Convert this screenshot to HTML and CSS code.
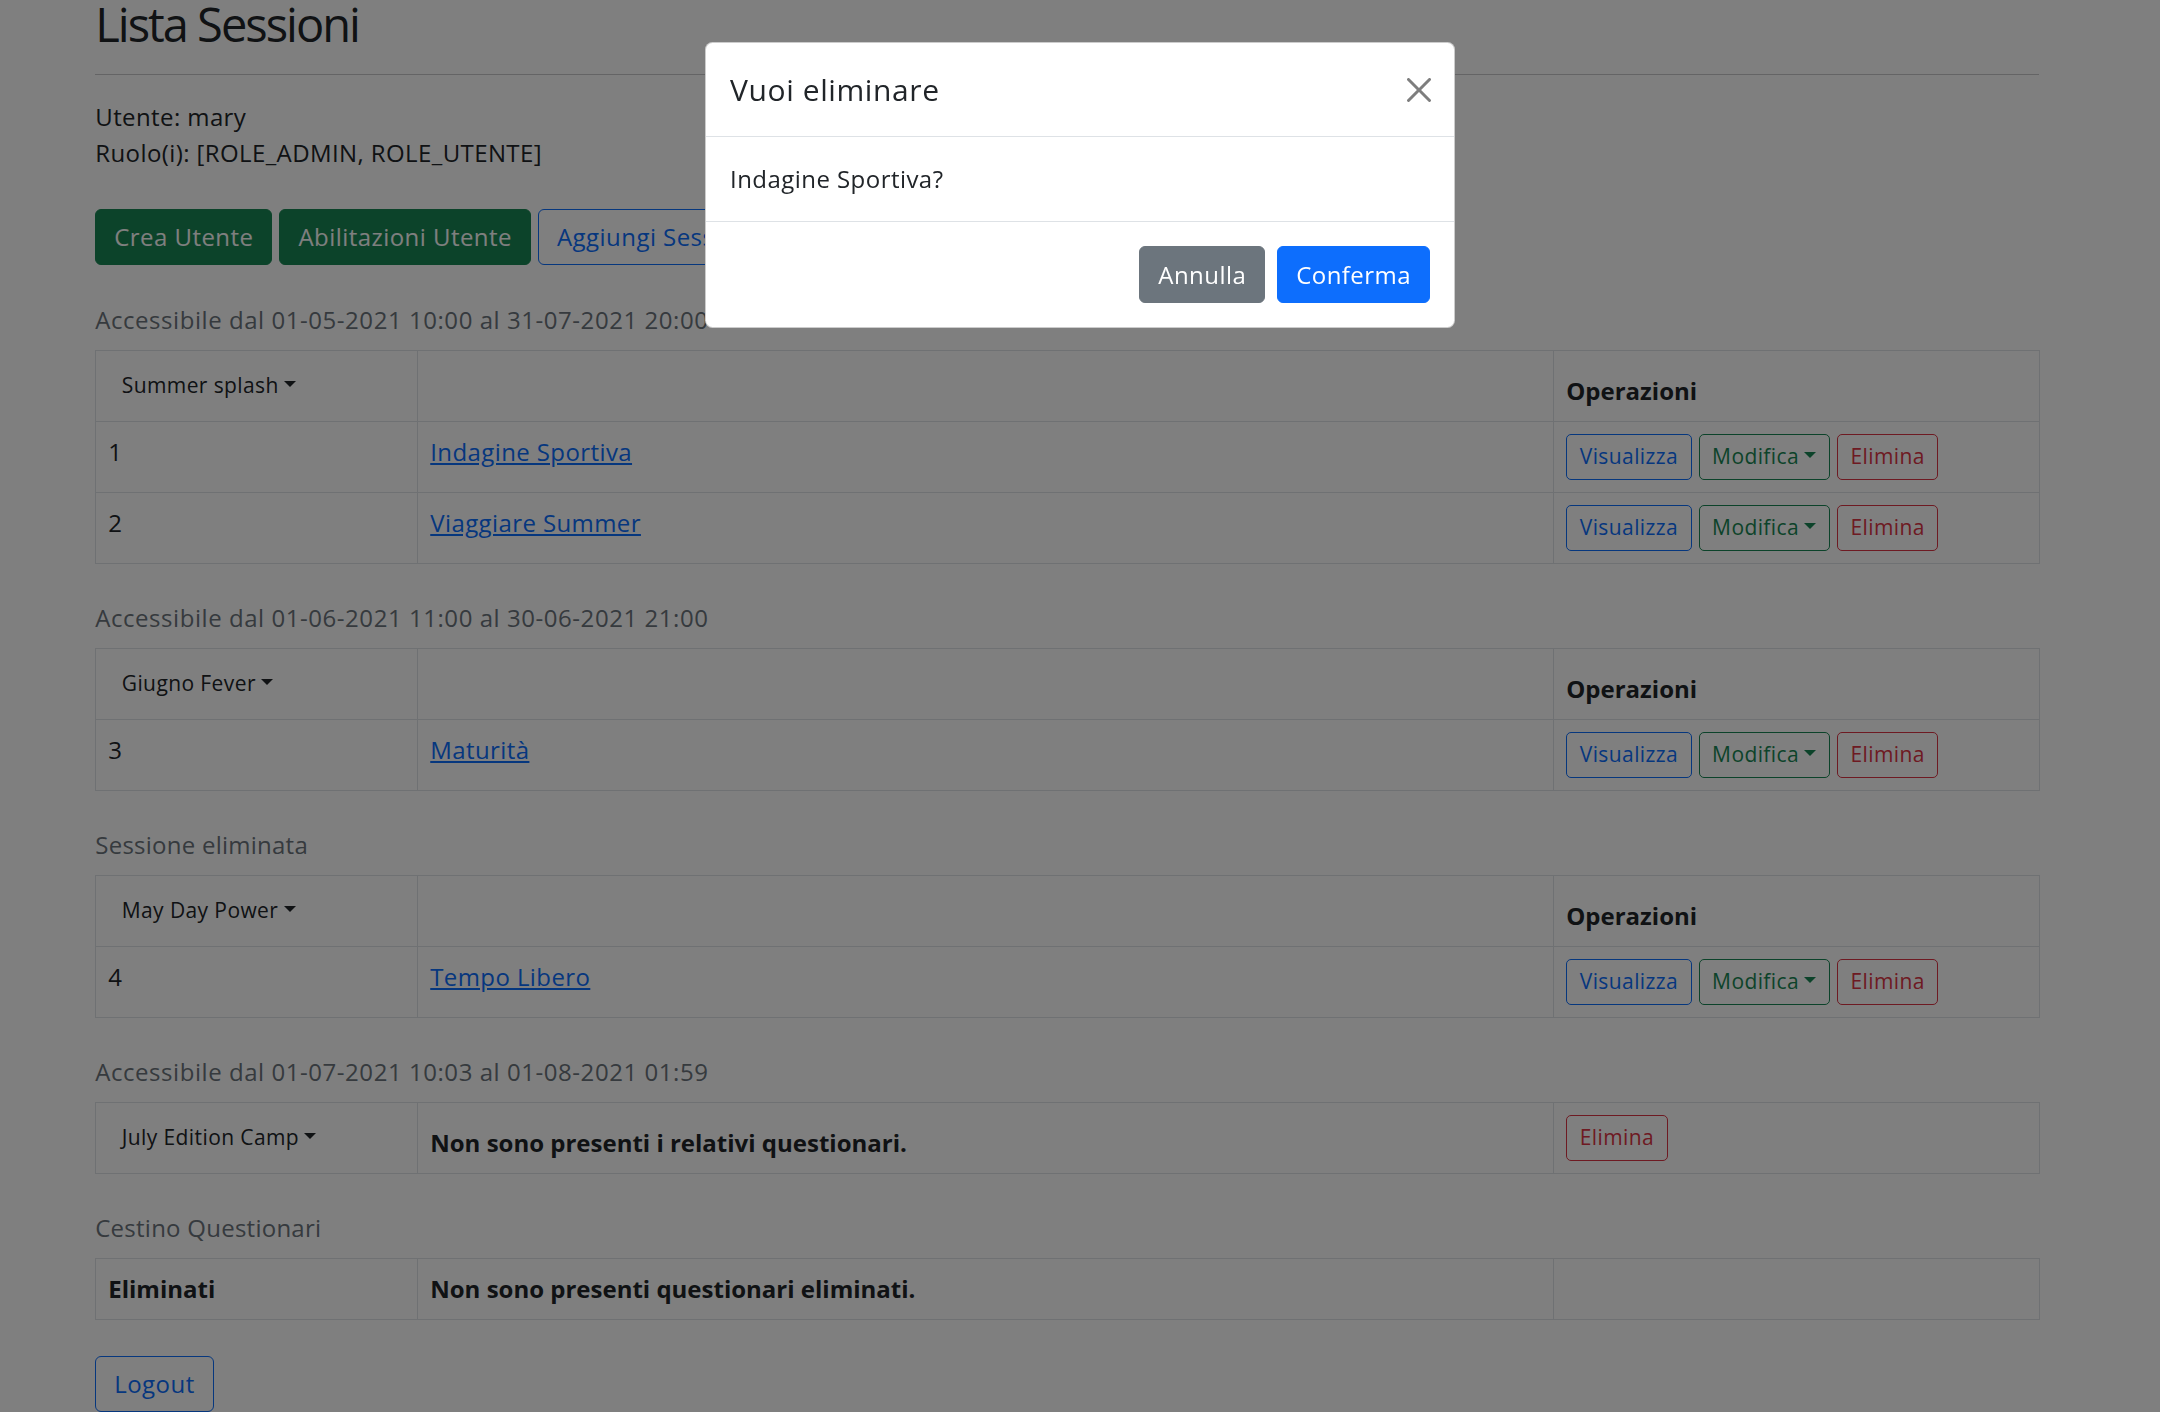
FILE: index.html
```html
<!DOCTYPE html>
<html lang="it">
<head>
<meta charset="utf-8">
<title>Lista Sessioni</title>
<link rel="stylesheet" href="styles.css">
</head>
<body class="modal-open">
<div class="container">
  <h2 class="page-title">Lista Sessioni</h2>
  <hr class="rule">
  <p class="user-info">Utente: mary<br>Ruolo(i): [ROLE_ADMIN, ROLE_UTENTE]</p>
  <div class="toolbar">
    <a class="btn btn-success" href="#">Crea Utente</a>
    <a class="btn btn-success" href="#">Abilitazioni Utente</a>
    <a class="btn btn-outline-primary" href="#">Aggiungi Sessione</a>
  </div>

  <table class="sessions">
    <caption class="dates">Accessibile dal 01-05-2021 10:00 al 31-07-2021 20:00</caption>
    <colgroup><col class="c1"><col class="c2"><col class="c3"></colgroup>
    <thead>
      <tr><th><button class="btn btn-sm dropdown-toggle">Summer splash</button></th><th></th><th>Operazioni</th></tr>
    </thead>
    <tbody>
      <tr>
        <td>1</td>
        <td><a class="link" href="#">Indagine Sportiva</a></td>
        <td><div class="ops"><a class="btn btn-sm btn-outline-primary" href="#">Visualizza</a><a class="btn btn-sm btn-outline-success dropdown-toggle" href="#">Modifica</a><a class="btn btn-sm btn-outline-danger" href="#">Elimina</a></div></td>
      </tr>
      <tr>
        <td>2</td>
        <td><a class="link" href="#">Viaggiare Summer</a></td>
        <td><div class="ops"><a class="btn btn-sm btn-outline-primary" href="#">Visualizza</a><a class="btn btn-sm btn-outline-success dropdown-toggle" href="#">Modifica</a><a class="btn btn-sm btn-outline-danger" href="#">Elimina</a></div></td>
      </tr>
    </tbody>
  </table>

  <table class="sessions">
    <caption class="dates">Accessibile dal 01-06-2021 11:00 al 30-06-2021 21:00</caption>
    <colgroup><col class="c1"><col class="c2"><col class="c3"></colgroup>
    <thead>
      <tr><th><button class="btn btn-sm dropdown-toggle">Giugno Fever</button></th><th></th><th>Operazioni</th></tr>
    </thead>
    <tbody>
      <tr>
        <td>3</td>
        <td><a class="link" href="#">Maturità</a></td>
        <td><div class="ops"><a class="btn btn-sm btn-outline-primary" href="#">Visualizza</a><a class="btn btn-sm btn-outline-success dropdown-toggle" href="#">Modifica</a><a class="btn btn-sm btn-outline-danger" href="#">Elimina</a></div></td>
      </tr>
    </tbody>
  </table>

  <table class="sessions">
    <caption>Sessione eliminata</caption>
    <colgroup><col class="c1"><col class="c2"><col class="c3"></colgroup>
    <thead>
      <tr><th><button class="btn btn-sm dropdown-toggle">May Day Power</button></th><th></th><th>Operazioni</th></tr>
    </thead>
    <tbody>
      <tr>
        <td>4</td>
        <td><a class="link" href="#">Tempo Libero</a></td>
        <td><div class="ops"><a class="btn btn-sm btn-outline-primary" href="#">Visualizza</a><a class="btn btn-sm btn-outline-success dropdown-toggle" href="#">Modifica</a><a class="btn btn-sm btn-outline-danger" href="#">Elimina</a></div></td>
      </tr>
    </tbody>
  </table>

  <table class="sessions">
    <caption class="dates">Accessibile dal 01-07-2021 10:03 al 01-08-2021 01:59</caption>
    <colgroup><col class="c1"><col class="c2"><col class="c3"></colgroup>
    <thead>
      <tr>
        <th><button class="btn btn-sm dropdown-toggle">July Edition Camp</button></th>
        <th>Non sono presenti i relativi questionari.</th>
        <th><div class="ops"><a class="btn btn-sm btn-outline-danger" href="#">Elimina</a></div></th>
      </tr>
    </thead>
  </table>

  <table class="sessions">
    <caption>Cestino Questionari</caption>
    <colgroup><col class="c1"><col class="c2"><col class="c3"></colgroup>
    <thead>
      <tr><th>Eliminati</th><th>Non sono presenti questionari eliminati.</th><th></th></tr>
    </thead>
  </table>

  <div class="logout-row">
    <a class="btn btn-outline-primary" href="#">Logout</a>
  </div>
</div>

<div class="backdrop"></div>
<div class="modal">
  <div class="modal-dialog">
    <div class="modal-content">
      <div class="modal-header">
        <h5 class="modal-title">Vuoi eliminare</h5>
        <button class="btn-close" aria-label="Close">
          <svg viewBox="0 0 16 16" width="24" height="24"><path fill="#000" d="M.293.293a1 1 0 0 1 1.414 0L8 6.586 14.293.293a1 1 0 1 1 1.414 1.414L9.414 8l6.293 6.293a1 1 0 0 1-1.414 1.414L8 9.414l-6.293 6.293a1 1 0 0 1-1.414-1.414L6.586 8 .293 1.707a1 1 0 0 1 0-1.414z"/></svg>
        </button>
      </div>
      <div class="modal-body">
        <p class="modal-text">Indagine Sportiva?</p>
      </div>
      <div class="modal-footer">
        <button class="btn btn-secondary">Annulla</button>
        <button class="btn btn-primary">Conferma</button>
      </div>
    </div>
  </div>
</div>
</body>
</html>
```
FILE: styles.css
```css
* { box-sizing: border-box; }

html, body {
  margin: 0;
  height: 100%;
  overflow: hidden;
}

body {
  font-family: "Open Sans", "Noto Sans", sans-serif;
  font-size: 24px;
  line-height: 1.5;
  letter-spacing: .4px;
  color: #212529;
  background: #fff;
  padding-right: 25.5px;
}

.container {
  width: 1980px;
  padding: 0 18px;
  margin: 0 auto;
}

.page-title {
  font-size: 47px;
  font-weight: 400;
  line-height: 48px;
  letter-spacing: -2px;
  margin: 0;
}

.rule {
  border: 0;
  border-top: 1.5px solid #c8c9ca;
  margin: 26px 0 24px;
}

.user-info {
  margin: 0 0 37.5px;
}

.toolbar {
  display: flex;
  gap: 7px;
  margin-bottom: 25px;
}

.btn {
  display: inline-block;
  font-family: inherit;
  font-size: 24px;
  font-weight: 400;
  line-height: 36px;
  letter-spacing: .45px;
  padding: 9px 18px;
  border: 1px solid transparent;
  border-radius: 6px;
  text-decoration: none;
  background: transparent;
  color: #212529;
  white-space: nowrap;
  cursor: pointer;
}

.btn-success { background: #198754; border-color: #198754; color: #fff; }
.btn-secondary { background: #6c757d; border-color: #6c757d; color: #fff; }
.btn-primary { background: #0d6efd; border-color: #0d6efd; color: #fff; }
.btn-outline-primary { color: #0d6efd; border-color: #0d6efd; }
.btn-outline-success { color: #198754; border-color: #198754; }
.btn-outline-danger { color: #dc3545; border-color: #dc3545; }

.btn-sm {
  font-size: 21px;
  line-height: 31.5px;
  letter-spacing: .4px;
  padding: 6.25px 12.5px;
  border-radius: 5px;
}

.dropdown-toggle::after {
  content: "";
  display: inline-block;
  margin-left: .255em;
  vertical-align: .255em;
  border-top: .3em solid;
  border-right: .3em solid transparent;
  border-left: .3em solid transparent;
  border-bottom: 0;
}

.sessions {
  width: 100%;
  border-collapse: collapse;
  table-layout: fixed;
  margin-bottom: 24px;
}

.sessions caption {
  caption-side: top;
  text-align: left;
  color: #6c757d;
  padding: 12px 0;
  letter-spacing: .25px;
}

.sessions caption.dates { letter-spacing: .55px; }

.sessions th,
.sessions td {
  padding: 12px;
  border: 1px solid #dee2e6;
  text-align: left;
  vertical-align: top;
}

.sessions th {
  font-weight: 700;
  letter-spacing: 0;
}

.sessions thead th { vertical-align: bottom; }

.c1 { width: 322px; }
.c2 { width: 1136px; }
.c3 { width: 486px; }

.ops {
  display: flex;
  gap: 7px;
}

.link {
  color: #0d6efd;
  text-decoration: underline;
}

.logout-row {
  padding-top: 12px;
}

.backdrop {
  position: fixed;
  inset: 0;
  background: rgba(0, 0, 0, .5);
}

.modal {
  position: fixed;
  inset: 0;
}

.modal-dialog {
  width: 750px;
  margin: 42px auto 0;
}

.modal-content {
  background: #fff;
  border: 1px solid rgba(0, 0, 0, .2);
  border-radius: 7.5px;
}

.modal-header {
  display: flex;
  align-items: center;
  padding: 24px;
  border-bottom: 1px solid #dee2e6;
}

.modal-title {
  margin: 0;
  font-size: 30px;
  line-height: 45px;
  font-weight: 400;
  letter-spacing: .6px;
}

.btn-close {
  display: block;
  width: 24px;
  height: 24px;
  padding: 6px;
  box-sizing: content-box;
  margin: -12px -7px -12px auto;
  border: 0;
  background: transparent;
  opacity: .5;
}

.btn-close svg { display: block; }

.modal-body {
  padding: 24px;
}

.modal-text {
  margin: 0;
  letter-spacing: .45px;
}

.modal-footer {
  display: flex;
  justify-content: flex-end;
  padding: 18px;
  border-top: 1px solid #dee2e6;
}

.modal-footer .btn {
  margin: 6px;
  padding: 9.5px 18px;
}
```
